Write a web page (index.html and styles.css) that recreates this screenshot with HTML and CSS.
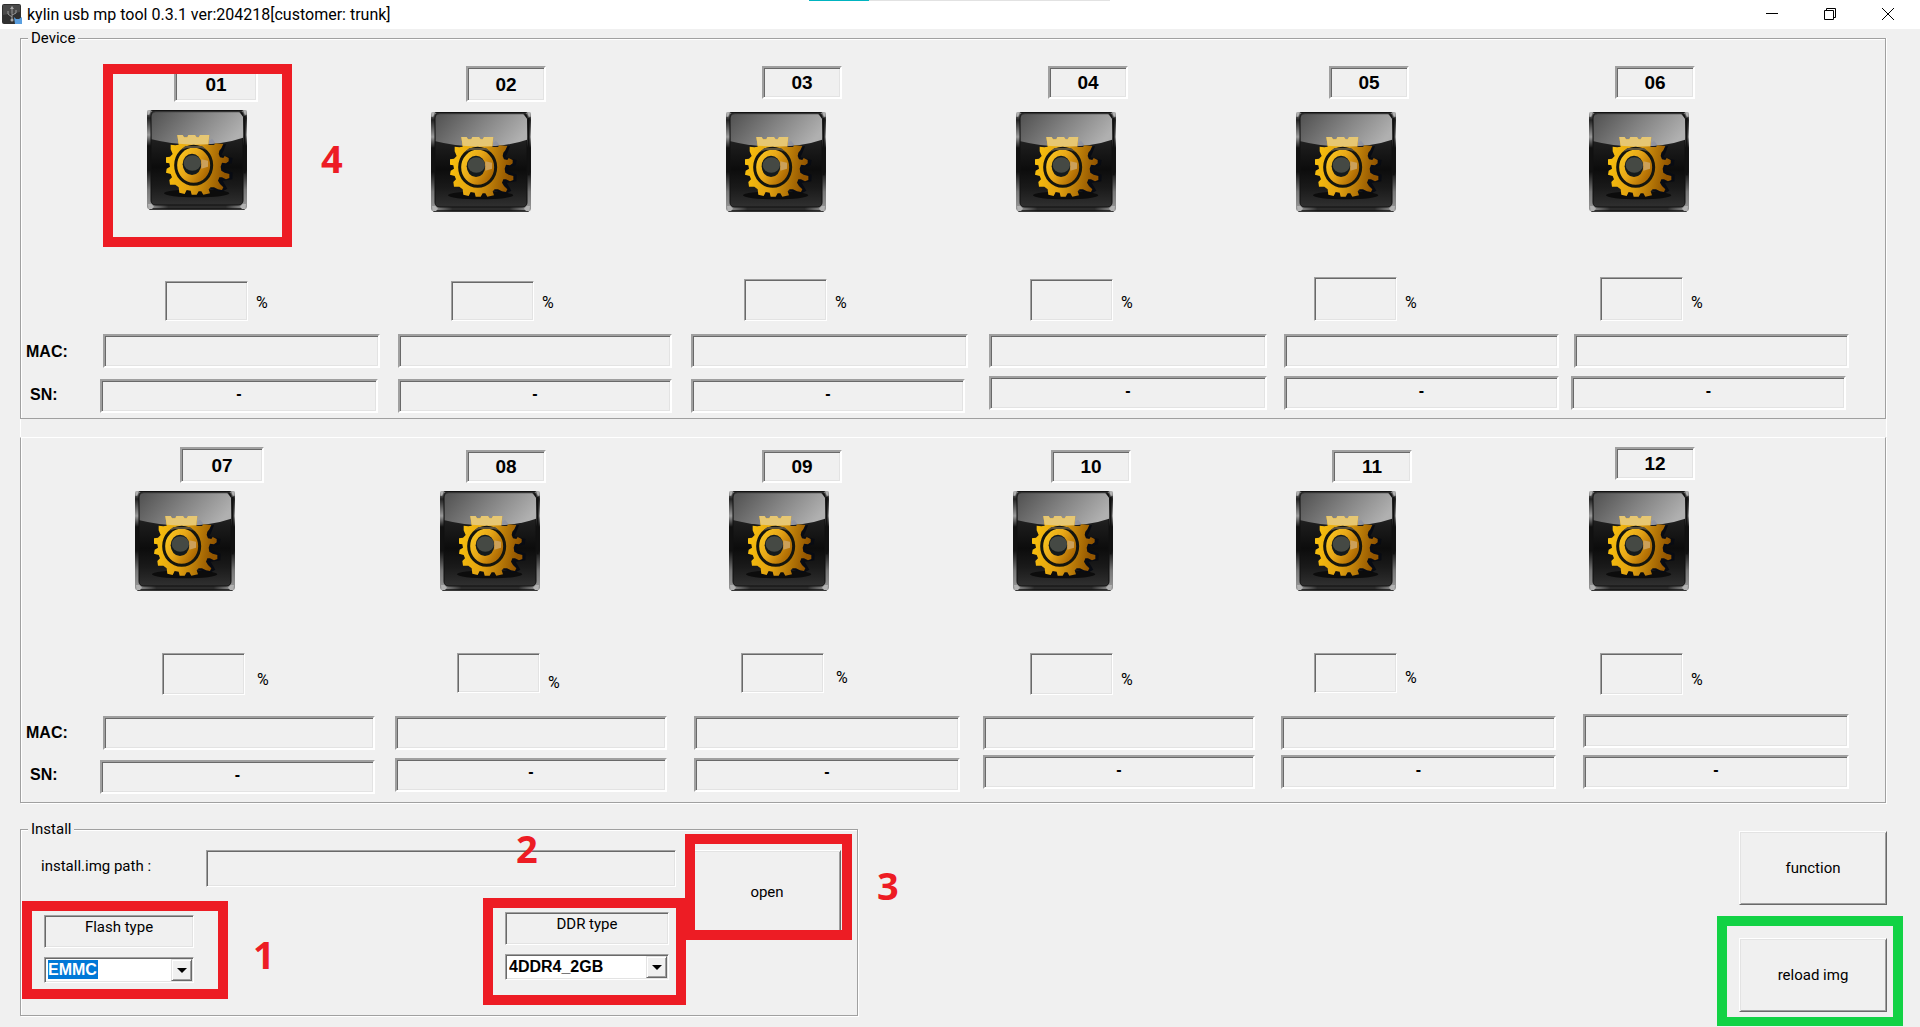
FILE: index.html
```html
<!DOCTYPE html>
<html lang="en">
<head>
<meta charset="utf-8">
<title>kylin usb mp tool 0.3.1</title>
<link rel="stylesheet" href="styles.css">
</head>
<body>
<svg class="defs" aria-hidden="true">
  <defs>
    <linearGradient id="body" x1="0" y1="0" x2="0" y2="1">
      <stop offset="0" stop-color="#3c3c3c"/><stop offset=".35" stop-color="#1c1c1c"/>
      <stop offset=".6" stop-color="#0c0c0c"/><stop offset=".8" stop-color="#1a1a1a"/><stop offset="1" stop-color="#303030"/>
    </linearGradient>
    <linearGradient id="gloss" x1="0" y1=".2" x2="1" y2=".5">
      <stop offset="0" stop-color="#565656"/><stop offset=".5" stop-color="#848484"/><stop offset="1" stop-color="#b0b0b0"/>
    </linearGradient>
    <linearGradient id="edge" x1="0" y1="0" x2="0" y2="1">
      <stop offset="0" stop-color="#888"/><stop offset=".08" stop-color="#222"/><stop offset=".25" stop-color="#999"/>
      <stop offset=".36" stop-color="#111"/><stop offset=".6" stop-color="#111"/><stop offset=".8" stop-color="#777"/><stop offset="1" stop-color="#999"/>
    </linearGradient>
    <linearGradient id="foot" x1="0" y1="0" x2="1" y2="0">
      <stop offset="0" stop-color="#999"/><stop offset=".2" stop-color="#2c2c2c"/>
      <stop offset=".8" stop-color="#2c2c2c"/><stop offset="1" stop-color="#999"/>
    </linearGradient>
    <linearGradient id="gold" x1="0" y1="0" x2="1" y2=".15">
      <stop offset="0" stop-color="#fcc40c"/><stop offset=".5" stop-color="#e0a010"/><stop offset="1" stop-color="#935600"/>
    </linearGradient>
    <linearGradient id="ring" x1="0" y1="0" x2="1" y2=".6">
      <stop offset="0" stop-color="#ffd020"/><stop offset=".5" stop-color="#e8a818"/><stop offset="1" stop-color="#a86400"/>
    </linearGradient>
    <symbol id="gear" viewBox="21 30 300 300">
      <rect x="21" y="30" width="300" height="299" rx="10" fill="url(#edge)"/>
      <path d="M36 309H306L314 328H28Z" fill="url(#foot)"/>
      <path d="M28 327H314" stroke="#151515" stroke-width="4"/>
      <path d="M34 31H308" stroke="#1c1c1c" stroke-width="4"/>
      <path d="M314 48V220" stroke="#111" stroke-width="6"/>
      <rect x="33" y="32" width="276" height="283" rx="13" fill="url(#body)" stroke="#111" stroke-width="3"/>
      <ellipse cx="170" cy="280" rx="98" ry="12" fill="#0c0c0c"/>
      <path d="M48 37H296Q309 38 309 50V113Q250 134 160 134Q90 132 35 118V50Q35 38 48 37Z" fill="url(#gloss)"/>
      <path d="M210 140L258 132L250 154L244 166L278 174L275 190L252 196L252 208L278 218L277 238L248 242L262 266L244 276L216 268L205 260Z" fill="#080b13"/>
      <path d="M112 105H128L132 112H142L145 105H165L170 112H176L180 105H208L205 135H222L226 130L250 132L244 145L238 152L236 162L240 172L250 174L254 168L266 174V184L258 190L246 188L242 200L244 212L254 218L268 222V234L258 238L246 232H238L234 242L240 252L250 262L246 270L234 268L222 262H212L206 268L210 280L190 284L184 274H176L170 284H155L152 272L140 270L134 282L118 278L116 262L106 254H90L88 240L96 232L92 222L78 218L80 206L90 200L88 190L78 188V172L90 170L98 162L92 148V134L106 136L116 134Z" fill="url(#gold)"/>
      <path d="M112 105H128L132 112H142L145 105H165L170 112H176L180 105H208L205 133L160 134L116 131Z" fill="#e6c773"/>
      <path d="M208 122L216 116L226 128L208 132Z" fill="#9093a0"/>
      <ellipse cx="161" cy="196" rx="54" ry="57" fill="url(#ring)" stroke="#14150e" stroke-width="9"/>
      <path d="M136 138H186L200 149L182 144H140L122 150Z" fill="#5b513a"/>
      <ellipse cx="156" cy="193" rx="28" ry="32" fill="#141a1b"/>
      <ellipse cx="157" cy="189" rx="26" ry="23" fill="#454944"/>
      <path d="M184 178L204 182V200L184 206Z" fill="#cba05a"/>
      <path d="M22 31H32L28 44H22ZM310 31H320V44H314ZM24 312H34L42 320L36 327H26ZM318 312H308L300 320L306 327H316Z" fill="#b2b2b2"/>
      <path d="M299 37L309 50V42L304 37Z" fill="#111"/>
    </symbol>
  </defs>
</svg>

<header class="titlebar">
  <svg class="app-icon" viewBox="0 0 20 20" aria-hidden="true">
    <rect width="19" height="20" rx="2" fill="#303030"/><path d="M1 1H18V8L1 11Z" fill="#4a4a4a"/>
    <path d="M10 16V4M10 13L6 10V7M10 11L14 9V6" stroke="#999" fill="none"/><path d="M8 5L10 2L12 5Z" fill="#aaa"/>
    <circle cx="10" cy="16" r="1.5" fill="#aaa"/><path d="M12 13L14 15H17L20 13V20H13Z" fill="#5a9fe0"/>
  </svg>
  <h1 class="title">kylin usb mp tool 0.3.1 ver:204218[customer: trunk]</h1>
  <div class="dock"><span class="dock-active"></span></div>
  <div class="window-buttons">
    <button type="button" aria-label="Minimize"><svg viewBox="0 0 12 12"><path d="M0 5.5H12"/></svg></button>
    <button type="button" aria-label="Restore"><svg viewBox="0 0 12 12"><path d="M.5 2.5H9.5V11.5H.5ZM2.5 2.5V.5H11.5V9.5H9.5"/></svg></button>
    <button type="button" aria-label="Close"><svg viewBox="0 0 12 12"><path d="M0 0L12 12M12 0L0 12"/></svg></button>
  </div>
</header>

<main>
  <fieldset class="group devices">
    <legend>Device</legend>
    <div class="row numbers numbers-a">
      <div class="number tall">01</div><div class="number tall">02</div><div class="number">03</div>
      <div class="number">04</div><div class="number">05</div><div class="number">06</div>
    </div>
    <div class="row icons icons-a">
      <div class="device-icon marked"><svg><use href="#gear"/></svg><span class="mark mark-device"></span><span class="digit digit-4">4</span></div>
      <div class="device-icon"><svg><use href="#gear"/></svg></div>
      <div class="device-icon"><svg><use href="#gear"/></svg></div>
      <div class="device-icon"><svg><use href="#gear"/></svg></div>
      <div class="device-icon"><svg><use href="#gear"/></svg></div>
      <div class="device-icon"><svg><use href="#gear"/></svg></div>
    </div>
    <div class="row progress progress-a">
      <label class="percent"><input class="short" readonly><span>%</span></label>
      <label class="percent"><input class="short" readonly><span>%</span></label>
      <label class="percent"><input readonly><span>%</span></label>
      <label class="percent"><input readonly><span>%</span></label>
      <label class="percent"><input class="tall" readonly><span>%</span></label>
      <label class="percent"><input class="tall" readonly><span>%</span></label>
    </div>
    <div class="row fields mac-a">
      <span class="row-label">MAC:</span>
      <input readonly aria-label="MAC 01"><input readonly aria-label="MAC 02"><input readonly aria-label="MAC 03">
      <input readonly aria-label="MAC 04"><input readonly aria-label="MAC 05"><input readonly aria-label="MAC 06">
    </div>
    <div class="row fields sn-a">
      <span class="row-label sn-label">SN:</span>
      <input readonly aria-label="SN 01" value="-"><input readonly aria-label="SN 02" value="-"><input readonly aria-label="SN 03" value="-">
      <input class="up" readonly aria-label="SN 04" value="-"><input class="up" readonly aria-label="SN 05" value="-"><input class="up" readonly aria-label="SN 06" value="-">
    </div>
  </fieldset>
  <div class="seam"></div>
  <section class="group devices devices-b">
    <div class="row numbers numbers-b">
      <div class="number tall">07</div><div class="number">08</div><div class="number">09</div>
      <div class="number">10</div><div class="number">11</div><div class="number up">12</div>
    </div>
    <div class="row icons icons-b">
      <div class="device-icon"><svg><use href="#gear"/></svg></div>
      <div class="device-icon"><svg><use href="#gear"/></svg></div>
      <div class="device-icon"><svg><use href="#gear"/></svg></div>
      <div class="device-icon"><svg><use href="#gear"/></svg></div>
      <div class="device-icon"><svg><use href="#gear"/></svg></div>
      <div class="device-icon"><svg><use href="#gear"/></svg></div>
    </div>
    <div class="row progress progress-b">
      <label class="percent wide"><input readonly><span>%</span></label>
      <label class="percent low"><input class="short" readonly><span>%</span></label>
      <label class="percent wide"><input class="short" readonly><span>%</span></label>
      <label class="percent"><input readonly><span>%</span></label>
      <label class="percent"><input class="short" readonly><span>%</span></label>
      <label class="percent"><input readonly><span>%</span></label>
    </div>
    <div class="row fields mac-b">
      <span class="row-label">MAC:</span>
      <input readonly aria-label="MAC 07"><input readonly aria-label="MAC 08"><input readonly aria-label="MAC 09">
      <input readonly aria-label="MAC 10"><input readonly aria-label="MAC 11"><input class="up" readonly aria-label="MAC 12">
    </div>
    <div class="row fields sn-b">
      <span class="row-label sn-label">SN:</span>
      <input readonly aria-label="SN 07" value="-"><input class="mid" readonly aria-label="SN 08" value="-"><input class="mid" readonly aria-label="SN 09" value="-">
      <input class="up" readonly aria-label="SN 10" value="-"><input class="up" readonly aria-label="SN 11" value="-"><input class="up" readonly aria-label="SN 12" value="-">
    </div>
  </section>

  <div class="bottom">
    <fieldset class="group install">
      <legend>Install</legend>
      <div class="install-body">
        <div class="install-form">
          <div class="path-row"><label for="path">install.img path :</label><input id="path" readonly></div>
          <div class="types">
            <div class="type type-flash marked">
              <label for="flash">Flash type</label>
              <span class="combo"><select id="flash" class="highlighted"><option>EMMC</option></select><span class="drop"></span></span>
              <span class="mark mark-flash"></span><span class="digit digit-1">1</span>
            </div>
            <div class="type type-ddr marked">
              <label for="ddr">DDR type</label>
              <span class="combo"><select id="ddr"><option>4DDR4_2GB</option></select><span class="drop"></span></span>
              <span class="mark mark-ddr"></span><span class="digit digit-2">2</span>
            </div>
          </div>
        </div>
        <div class="open marked">
          <button type="button" class="push">open</button>
          <span class="mark mark-open"></span><span class="digit digit-3">3</span>
        </div>
      </div>
    </fieldset>
    <div class="actions">
      <button type="button" class="push">function</button>
      <div class="marked"><button type="button" class="push">reload img</button><span class="mark mark-reload"></span></div>
    </div>
  </div>
</main>
</body>
</html>
```
FILE: styles.css
```css
* { box-sizing: border-box; }

body {
  margin: 0;
  background: #f0f0f0;
  color: #000;
  font: 15px/17px Roboto, "Noto Sans", sans-serif;
}

.defs { position: absolute; width: 0; height: 0; }

main { padding-bottom: 10px; }

input, select, button { font: inherit; color: inherit; border-radius: 0; min-width: 0; }

/* title bar */
.titlebar { position: relative; display: flex; align-items: flex-start; height: 29px; background: #fff; }
.app-icon { width: 20px; height: 20px; margin: 4px 5px 0 2px; }
.title { flex: 1; margin: 0; font-size: 16px; font-weight: 400; line-height: 29px; }
.dock { position: absolute; top: 0; left: 42.15%; width: 301px; height: 1px; background: #e2e2e2; }
.dock-active { display: block; width: 60px; height: 1px; background: #00b4c0; }
.window-buttons { display: flex; padding-right: 3px; }
.window-buttons button {
  display: flex; align-items: center; justify-content: center;
  width: 58px; height: 28px; padding: 0; border: 0; background: none;
}
.window-buttons svg { width: 12px; height: 12px; fill: none; stroke: #000; }

/* etched group boxes */
.group {
  min-width: 0;
  margin: 0;
  padding: 0;
  border: 1px solid #a0a0a0;
  box-shadow: inset 1px 1px #fff, 1px 1px #fff;
}
.group legend { margin-left: 7px; padding: 0 3px; background: #f0f0f0; line-height: 17px; }
.devices { margin: 1px 34px 0 20px; padding: 19px 0 5px; box-shadow: inset 1px 1px #fff, 1px 0 #fff; }
.devices-b { margin-top: 0; padding: 9px 0 8px; border-top-color: #fff; box-shadow: inset 1px 0 #fff, 1px 1px #fff; }
.seam { height: 18px; margin: 0 33px 0 20px; border: solid; border-width: 0 1px; border-color: #a0a0a0 #fff; }

/* device rows */
.row { display: grid; align-items: end; }
.up { align-self: start; }
.mid { align-self: center; }

.number, .fields input {
  border: 2px solid;
  border-color: #a0a0a0 #fff #fff #a0a0a0;
  box-shadow: inset 1px 1px #696969, inset -1px -1px #e3e3e3;
}
.number, .row-label, .fields input, .combo select { font-family: "Liberation Sans", Arial, sans-serif; font-weight: 700; }
.number {
  display: flex; align-items: center; justify-content: center;
  width: 80px; height: 33px; padding-bottom: 1px; font-size: 19px;
}
.number.tall { height: 36px; padding-bottom: 0; }
.numbers > :first-child { grid-column: 2; }
.numbers-a { align-items: start; grid-template-columns: 153fr 292fr 296fr 286fr 281fr 286fr 270fr; }
.numbers-b { grid-template-columns: 159fr 286fr 296fr 289fr 281fr 283fr 270fr; }
.numbers > .tall:first-child { width: 84px; }

.device-icon { width: 100px; height: 100px; }
.device-icon svg { display: block; width: 100px; height: 100px; }
.icons > :first-child { grid-column: 2; align-self: start; }
.icons-a { min-height: 102px; margin-top: 8px; grid-template-columns: 126fr 284fr 295fr 290fr 280fr 293fr 296fr; }
.icons-b { margin-top: 8px; grid-template-columns: 114fr 305fr 289fr 284fr 283fr 293fr 296fr; }

.progress > :first-child { grid-column: 2; }
.progress-a { height: 44px; margin-top: 65px; grid-template-columns: 144fr 286fr 293fr 286fr 284fr 286fr 285fr; }
.progress-b { height: 42px; margin-top: 62px; align-items: start; grid-template-columns: 141fr 295fr 284fr 289fr 284fr 286fr 285fr; }
.percent { display: flex; align-items: flex-end; gap: 8px; }
.percent.wide { gap: 12px; }
.percent input { width: 83px; height: 42px; }
.percent input.short { height: 40px; }
.percent input.tall { height: 44px; }
.percent span { padding-bottom: 10px; font-size: 16px; }
.progress-b .percent span { padding-bottom: 7px; }
.progress-b .low span { padding-bottom: 2px; }

.percent input, .path-row input, .type label {
  background: #f0f0f0;
  border: 1px solid;
  border-color: #a0a0a0 #fff #fff #a0a0a0;
  box-shadow: inset 1px 1px #696969, inset -1px -1px #e3e3e3;
}

.fields input { width: 100%; height: 34px; padding: 0 0 5px; background: #f0f0f0; text-align: center; font-size: 16px; }
.fields input:nth-of-type(1) { grid-column: 2; }
.fields input:nth-of-type(2) { grid-column: 4; }
.fields input:nth-of-type(3) { grid-column: 6; }
.fields input:nth-of-type(4) { grid-column: 8; }
.fields input:nth-of-type(5) { grid-column: 10; }
.fields input:nth-of-type(6) { grid-column: 12; }
.row-label { align-self: center; padding-left: 5px; font-size: 16px; }
.sn-label { padding-left: 9px; }
.mac-a { margin-top: 13px; grid-template-columns: 82fr 277fr 18fr 274fr 19fr 277fr 21fr 278fr 17fr 275fr 15fr 275fr 36fr; }
.sn-a { height: 37px; margin-top: 8px; grid-template-columns: 79fr 278fr 20fr 274fr 19fr 274fr 24fr 278fr 17fr 275fr 12fr 275fr 39fr; }
.mac-b { height: 36px; margin-top: 19px; grid-template-columns: 82fr 272fr 20fr 272fr 27fr 266fr 23fr 272fr 26fr 275fr 27fr 266fr 36fr; }
.sn-b { height: 39px; margin-top: 5px; grid-template-columns: 79fr 275fr 20fr 272fr 27fr 266fr 23fr 272fr 26fr 275fr 27fr 266fr 36fr; }

/* bottom area */
.bottom {
  display: grid;
  grid-template-columns: 838fr 881fr 148fr;
  align-items: start;
  margin: 18px 33px 0 20px;
}
.install-body { display: flex; align-items: flex-start; gap: 17px; padding: 12px 16px 32px 0; }
.install-form { flex: 1; }
.path-row { display: flex; align-items: center; }
.path-row label { width: 185px; padding: 0 0 5px 20px; }
.path-row input { flex: 1; height: 37px; }
.types { display: flex; justify-content: space-between; height: 71px; margin-top: 25px; padding: 0 7px 0 23px; }
.type { display: flex; flex-direction: column; gap: 9px; width: 164px; }
.type-flash { width: 150px; align-self: flex-end; }
.type label { height: 33px; padding-top: 3px; text-align: center; }
.combo { display: block; position: relative; height: 26px; }
.combo select {
  appearance: none;
  width: 100%; height: 26px; padding: 0 3px 2px; font-size: 16px;
  background: #fff;
  border: 1px solid;
  border-color: #a0a0a0 #fff #fff #a0a0a0;
  box-shadow: inset 1px 1px #696969, inset -1px -1px #e3e3e3;
}
.combo select.highlighted { color: #fff; background: linear-gradient(#0078d7, #0078d7) 3px 2px / 50px 19px no-repeat #fff; }
.drop {
  position: absolute; right: 2px; top: 2px;
  display: flex; align-items: center; justify-content: center;
  width: 21px; height: 22px;
  background: #f0f0f0;
  border: 1px solid;
  border-color: #e3e3e3 #696969 #696969 #e3e3e3;
  box-shadow: inset 1px 1px #fff, inset -1px -1px #a0a0a0;
  pointer-events: none;
}
.drop::after { content: ""; border: 5px solid transparent; border-top-color: #000; border-bottom: 0; }

.push {
  display: block;
  width: 148px; height: 74px; padding: 0;
  background: #f0f0f0;
  border: 1px solid;
  border-color: #fff #696969 #696969 #fff;
  box-shadow: inset 1px 1px #e3e3e3, inset -1px -1px #a0a0a0;
}
.open .push { height: 85px; }
.actions { grid-column: 3; display: grid; gap: 33px; padding-top: 10px; }

/* numbered highlight frames laid over the controls */
.marked { position: relative; }
.mark { position: absolute; z-index: 1; border: 10px solid #ed1c24; pointer-events: none; }
.mark-device { left: -44px; top: -46px; width: 189px; height: 183px; }
.mark-flash { left: -22px; top: -14px; width: 206px; height: 98px; }
.mark-ddr { left: -22px; top: -14px; width: 203px; height: 107px; }
.mark-open { left: -8px; top: -16px; width: 167px; height: 106px; }
.mark-reload { left: -22px; top: -22px; width: 186px; height: 111px; border-color: #12d245; }
.digit { position: absolute; z-index: 1; color: #ed1c24; font: 700 38px/40px "Open Sans", "Noto Sans", sans-serif; }
.digit-4 { left: 174px; top: 28px; }
.digit-1 { left: 209px; top: 19px; }
.digit-2 { left: 11px; top: -84px; }
.digit-3 { left: 184px; top: 15px; }
```
